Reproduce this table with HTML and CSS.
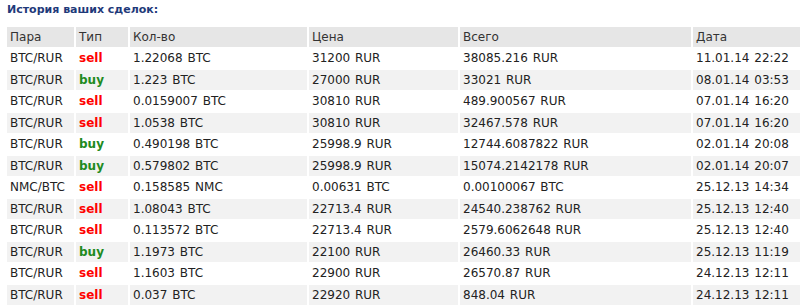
FILE: index.html
```html
<!DOCTYPE html>
<html lang="ru">
  <head>
    <meta charset="UTF-8">
    <title>История сделок</title>
    <link rel="stylesheet" href="styles.css">
  </head>
  <body>
    <h2 class="ttl">История ваших сделок:</h2>
    <table class="hist">
      <thead>
        <tr><th class="c1">Пара</th><th class="c2">Тип</th><th class="c3">Кол-во</th><th class="c4">Цена</th><th class="c5">Всего</th><th class="c6">Дата</th></tr>
      </thead>
      <tbody>
        <tr><td>BTC/RUR</td><td class="sell">sell</td><td>1.22068 BTC</td><td>31200 RUR</td><td>38085.216 RUR</td><td>11.01.14 22:22</td></tr>
        <tr><td>BTC/RUR</td><td class="buy">buy</td><td>1.223 BTC</td><td>27000 RUR</td><td>33021 RUR</td><td>08.01.14 03:53</td></tr>
        <tr><td>BTC/RUR</td><td class="sell">sell</td><td>0.0159007 BTC</td><td>30810 RUR</td><td>489.900567 RUR</td><td>07.01.14 16:20</td></tr>
        <tr><td>BTC/RUR</td><td class="sell">sell</td><td>1.0538 BTC</td><td>30810 RUR</td><td>32467.578 RUR</td><td>07.01.14 16:20</td></tr>
        <tr><td>BTC/RUR</td><td class="buy">buy</td><td>0.490198 BTC</td><td>25998.9 RUR</td><td>12744.6087822 RUR</td><td>02.01.14 20:08</td></tr>
        <tr><td>BTC/RUR</td><td class="buy">buy</td><td>0.579802 BTC</td><td>25998.9 RUR</td><td>15074.2142178 RUR</td><td>02.01.14 20:07</td></tr>
        <tr><td>NMC/BTC</td><td class="sell">sell</td><td>0.158585 NMC</td><td>0.00631 BTC</td><td>0.00100067 BTC</td><td>25.12.13 14:34</td></tr>
        <tr><td>BTC/RUR</td><td class="sell">sell</td><td>1.08043 BTC</td><td>22713.4 RUR</td><td>24540.238762 RUR</td><td>25.12.13 12:40</td></tr>
        <tr><td>BTC/RUR</td><td class="sell">sell</td><td>0.113572 BTC</td><td>22713.4 RUR</td><td>2579.6062648 RUR</td><td>25.12.13 12:40</td></tr>
        <tr><td>BTC/RUR</td><td class="buy">buy</td><td>1.1973 BTC</td><td>22100 RUR</td><td>26460.33 RUR</td><td>25.12.13 11:19</td></tr>
        <tr><td>BTC/RUR</td><td class="sell">sell</td><td>1.1603 BTC</td><td>22900 RUR</td><td>26570.87 RUR</td><td>24.12.13 12:11</td></tr>
        <tr><td>BTC/RUR</td><td class="sell">sell</td><td>0.037 BTC</td><td>22920 RUR</td><td>848.04 RUR</td><td>24.12.13 12:11</td></tr>
      </tbody>
    </table>
  </body>
</html>
```

FILE: styles.css
```css
body {margin: 0 0 0 5px; background: #fff; color: #222;
  font-family: 'DejaVu Sans', Verdana, sans-serif; font-size: 12px;
  overflow: hidden;}
.ttl {color: #1f3a7a; font-size: 11px; font-weight: 700; line-height: 14px;
  margin: 3px 0 8px 2px;}
.hist {border-spacing: 2px; table-layout: fixed; width: 798px;}
.hist th, .hist td {text-align: left; font-weight: 400; line-height: 14.5px;
  padding: 2.5px 3px; white-space: nowrap; word-spacing: 1px;}
.hist th {background: #e6e6e6; color: #333;}
.hist tbody tr:nth-child(even) {background: #f2f2f2;}
.c1 {width: 61px;}
.c2 {width: 46px;}
.c3 {width: 171px;}
.c4 {width: 143px;}
.c5 {width: 225px;}
.c6 {width: 104px;}
.hist .sell {color: #f00; font-weight: 700;}
.hist .buy {color: #208a20; font-weight: 700;}
```
